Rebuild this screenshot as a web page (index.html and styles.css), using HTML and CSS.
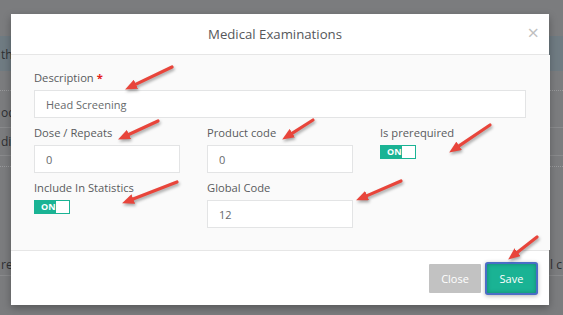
FILE: index.html
```html
<!DOCTYPE html>
<html>
<head>
<meta charset="utf-8">
<link rel="stylesheet" href="styles.css">
</head>
<body>
<div class="page">
  <div class="bg-top"></div>
  <div class="band"><span class="bg-text">the</span></div>
  <div class="bg-row r1"></div>
  <div class="bg-row r2"><span class="bg-text">ode</span></div>
  <div class="bg-row r3"><span class="bg-text">dia</span></div>
  <div class="bg-row r4"></div>
  <div class="bg-row r5"><span class="bg-text">red</span><span class="bg-text right">l c</span></div>
</div>

<div class="modal">
  <div class="modal-header">
    <h4 class="modal-title">Medical Examinations</h4>
    <span class="close">&times;</span>
  </div>
  <div class="modal-body">
    <div class="form-grid">
      <div class="field full">
        <label class="lbl">Description <span class="req">*</span></label>
        <input class="inp" type="text" value="Head Screening">
      </div>
      <div class="field">
        <label class="lbl">Dose / Repeats</label>
        <input class="inp" type="text" value="0">
      </div>
      <div class="field">
        <label class="lbl">Product code</label>
        <input class="inp" type="text" value="0">
      </div>
      <div class="field">
        <label class="lbl">Is prerequired</label>
        <div class="switch"><span class="on">ON</span><span class="off"></span></div>
      </div>
      <div class="field">
        <label class="lbl">Include In Statistics</label>
        <div class="switch"><span class="on">ON</span><span class="off"></span></div>
      </div>
      <div class="field">
        <label class="lbl">Global Code</label>
        <input class="inp" type="text" value="12">
      </div>
    </div>
  </div>
  <div class="modal-footer">
    <button class="btn btn-close">Close</button>
    <button class="btn btn-save">Save</button>
  </div>
</div>

<svg class="arrows" width="563" height="315" viewBox="0 0 563 315">
  <defs>
    <marker id="ah" viewBox="0 0 12 10" markerWidth="12" markerHeight="10" refX="5" refY="5" orient="auto" markerUnits="userSpaceOnUse">
      <path d="M0,0 L12,5 L0,10 z" fill="#e8453b"/>
    </marker>
  </defs>
  <g stroke="#e8453b" stroke-width="3.2" stroke-linecap="round" fill="none">
    <line x1="172" y1="67" x2="131.4" y2="86.4" marker-end="url(#ah)"/>
    <line x1="158" y1="121" x2="124.4" y2="136.5" marker-end="url(#ah)"/>
    <line x1="313" y1="120" x2="288.1" y2="135.8" marker-end="url(#ah)"/>
    <line x1="490" y1="125" x2="455" y2="148.6" marker-end="url(#ah)"/>
    <line x1="177" y1="182" x2="128.6" y2="200.8" marker-end="url(#ah)"/>
    <line x1="401" y1="181" x2="362.5" y2="197.6" marker-end="url(#ah)"/>
    <line x1="537" y1="237" x2="513.7" y2="255.3" marker-end="url(#ah)"/>
  </g>
</svg>
</body>
</html>
```
FILE: styles.css
```css
* { box-sizing: border-box; }

body {
  margin: 0;
  width: 563px;
  height: 315px;
  overflow: hidden;
  position: relative;
  background: #7b7c7e;
  font-family: "Open Sans", "DejaVu Sans", sans-serif;
}

/* background page */
.page { width: 563px; }
.bg-top { height: 36px; }
.band {
  height: 35px;
  background: #6f7b82;
  line-height: 35px;
}
.bg-text {
  font-size: 12px;
  color: #2e3033;
  padding-left: 1px;
  white-space: nowrap;
}
.bg-row { display: flex; }
.r1 { height: 20px; border-bottom: 1px dotted #98999b; }
.r2 { height: 37px; padding-top: 14px; line-height: 16px; border-bottom: 1px solid #898a8c; }
.r3 { height: 28px; line-height: 27px; border-bottom: 1px solid #898a8c; }
.r4 { height: 11px; border-bottom: 1px dotted #98999b; }
.r5 { height: 109px; padding-top: 88px; line-height: 20px; border-bottom: 1px solid #898a8c; justify-content: space-between; }
.bg-text.right { padding: 0 1px 0 0; }

/* modal */
.modal {
  position: absolute;
  left: 11px;
  top: 14px;
  width: 538px;
  background: #fff;
  box-shadow: 0 3px 8px rgba(0, 0, 0, 0.3);
}
.modal-header {
  position: relative;
  height: 41px;
  border-bottom: 1px solid #e6e6e6;
  display: flex;
  align-items: center;
  justify-content: center;
  padding: 0 30px 0 20px;
}
.modal-title {
  margin: 0;
  font-size: 13.2px;
  font-weight: 400;
  color: #56575a;
  line-height: 40px;
}
.close {
  position: absolute;
  right: 10px;
  top: 8px;
  font-size: 20px;
  line-height: 22px;
  color: #c0c0c0;
}
.modal-body {
  height: 195px;
  background: #fafafa;
  padding: 16px 22px 0 23px;
  margin-right: -1px;
}
.form-grid {
  display: grid;
  grid-template-columns: 146px 146px 146px;
  column-gap: 27px;
  row-gap: 8px;
}
.field.full { grid-column: 1 / -1; }
.lbl {
  display: block;
  font-size: 11.2px;
  line-height: 14px;
  color: #595b5d;
  margin-bottom: 5px;
}
.req { color: #e3211c; font-weight: 700; }
.inp {
  display: block;
  width: 100%;
  height: 28px;
  border: 1px solid #e3e4e5;
  background: #fff;
  padding: 0 11px;
  font-family: "Open Sans", "DejaVu Sans", sans-serif;
  font-size: 11px;
  color: #676a6c;
  outline: none;
}
.switch {
  display: flex;
  width: 36px;
  height: 14px;
  border: 1px solid #1ab394;
  background: #fff;
}
.switch .on {
  width: 21px;
  background: #1ab394;
  color: #fff;
  font-size: 9px;
  font-weight: 700;
  line-height: 12px;
  padding-left: 6px;
}
.switch .off { flex: 1; }

.modal-footer {
  height: 55px;
  border-top: 1px solid #e6e6e6;
  display: flex;
  justify-content: flex-end;
  align-items: flex-start;
  gap: 6px;
  padding: 13px 13px 0 0;
}
.btn {
  height: 29px;
  border: none;
  border-radius: 1px;
  font-family: "Open Sans", "DejaVu Sans", sans-serif;
  font-size: 11px;
  color: #fff;
  padding: 0 12px;
  cursor: pointer;
}
.btn-close { width: 52px; background: #c2c2c2; }
.btn-save {
  width: 49px;
  background: #1ab394;
  box-shadow: inset 0 0 4px rgba(0, 0, 0, 0.25), 0 0 0 2px #4a6ec6, 0 1px 4px 2px rgba(0, 0, 0, 0.3);
}

.arrows {
  position: absolute;
  left: 0;
  top: 0;
  filter: drop-shadow(1px 2px 1.5px rgba(0, 0, 0, 0.35));
}
```
